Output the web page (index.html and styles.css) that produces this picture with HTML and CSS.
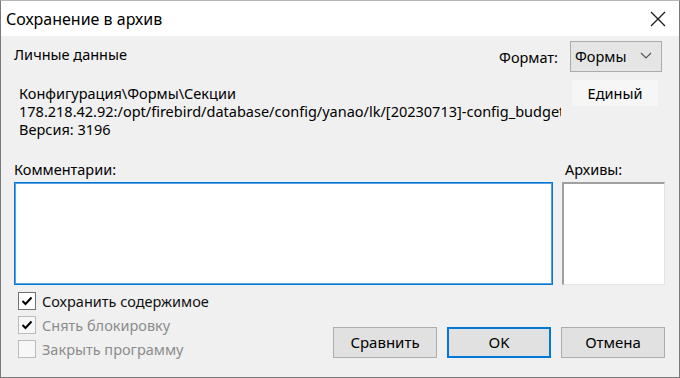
FILE: index.html
```html
<!DOCTYPE html>
<html lang="ru">
<head>
	<meta charset="UTF-8">
	<title>Сохранение в архив</title>
	<link rel="stylesheet" href="styles.css">
</head>
<body>
	<div class="dialog">
		<div class="titlebar">
			<span class="title">Сохранение в архив</span>
			<span class="close">
				<svg width="16" height="16" viewBox="0 0 16 16"><path d="M1 1L15 15M15 1L1 15" stroke="#1a1a1a" stroke-width="1.3" fill="none"/></svg>
			</span>
		</div>
		<div class="content">
			<div class="row-head">
				<div class="caption">Личные данные</div>
				<div class="format">
					<span>Формат:</span>
					<div class="select">
						<span>Формы</span>
						<svg width="12" height="8" viewBox="0 0 12 8"><path d="M1 1L6 6L11 1" stroke="#555" stroke-width="1.2" fill="none"/></svg>
					</div>
				</div>
			</div>
			<div class="row-info">
				<div class="info">
					<p>Конфигурация\Формы\Секции</p>
					<p>178.218.42.92:/opt/firebird/database/config/yanao/lk/[20230713]-config_budget.fdb</p>
					<p>Версия: 3196</p>
				</div>
				<div class="flat-btn">Единый</div>
			</div>
			<div class="fields">
				<div class="label">Комментарии:</div>
				<div class="label">Архивы:</div>
				<div class="memo"></div>
				<div class="listbox"></div>
			</div>
			<div class="row-bottom">
				<div class="checks">
					<label class="check"><span class="box on">
						<svg width="12" height="10" viewBox="0 0 12 10"><path d="M1.5 5L4.5 8L10.5 1.5" stroke="#000" stroke-width="2" fill="none"/></svg>
					</span>Сохранить содержимое</label>
					<label class="check disabled"><span class="box on">
						<svg width="12" height="10" viewBox="0 0 12 10"><path d="M1.5 5L4.5 8L10.5 1.5" stroke="#000" stroke-width="2" fill="none"/></svg>
					</span>Снять блокировку</label>
					<label class="check disabled"><span class="box"></span>Закрыть программу</label>
				</div>
				<div class="buttons">
					<div class="btn">Сравнить</div>
					<div class="btn default">OK</div>
					<div class="btn">Отмена</div>
				</div>
			</div>
		</div>
	</div>
</body>
</html>
```

FILE: styles.css
```css
*{margin:0; padding:0; box-sizing:border-box;}
body{
	width:680px;
	height:378px;
	font-family:"Noto Sans","Open Sans","DejaVu Sans",sans-serif;
	font-size:14.5px;
	color:#000;
	background:#f0f0f0;
}
.dialog{
	width:680px;
	height:378px;
	border:1px solid #7a7a7a;
	border-top-color:#b5b5b5;
	background:#f0f0f0;
	display:flex;
	flex-direction:column;
}
.titlebar{
	height:35px;
	background:#fff;
	display:flex;
	align-items:center;
	justify-content:space-between;
	padding:0 13px 0 5px;
}
.title{
	font-size:16px;
}
.close{
	display:flex;
	padding-top:1px;
}
.content{
	flex:1;
	display:flex;
	flex-direction:column;
	padding:4px 14px 0 13px;
}
.row-head{
	display:flex;
	justify-content:space-between;
	height:32px;
}
.caption{
	padding-top:4px;
}
.format{
	display:flex;
	align-items:center;
	gap:12px;
	margin-right:3px;
}
.format > span{
	padding-top:2px;
}
.select{
	width:92px;
	height:31px;
	background:#e5e5e5;
	border:1px solid #acacac;
	display:flex;
	align-items:center;
	justify-content:space-between;
	padding:0 9px 0 4px;
}
.row-info{
	display:flex;
	justify-content:space-between;
	margin-top:8px;
	height:79px;
}
.info{
	width:547px;
	overflow:hidden;
	white-space:nowrap;
	padding:4px 0 0 5px;
	line-height:18px;
}
.flat-btn{
	width:86px;
	height:26px;
	background:#f6f6f6;
	text-align:center;
	line-height:26px;
	margin-right:7px;
}
.fields{
	display:grid;
	grid-template-columns:539px 103px;
	column-gap:9px;
	grid-template-rows:23px 103px;
}
.label + .label{
	padding-left:3px;
}
.memo{
	background:#fff;
	border:1px solid #0078d7;
	box-shadow:inset 0 0 0 1px #5aa0e0;
}
.listbox{
	background:#fff;
	border:1px solid #e3e3e3;
	border-top:2px solid #a0a0a0;
	border-left:2px solid #a0a0a0;
}
.row-bottom{
	flex:1;
	display:flex;
	justify-content:space-between;
	padding-top:7px;
}
.checks{
	display:flex;
	flex-direction:column;
	gap:6px;
	padding-left:4px;
}
.check{
	display:flex;
	align-items:center;
	gap:6px;
	height:18px;
	font-size:14.5px;
	color:#111;
}
.check.disabled{
	color:#8c8c8c;
}
.box{
	width:18px;
	height:18px;
	border:1px solid #707070;
	background:#fff;
	display:flex;
	align-items:center;
	justify-content:center;
}
.disabled .box{
	border-color:#bcbcbc;
	background:#f7f7f7;
}
.buttons{
	display:flex;
	gap:10px;
	align-self:flex-end;
	margin-bottom:19px;
}
.btn{
	width:104px;
	height:31px;
	background:#e1e1e1;
	border:1px solid #adadad;
	text-align:center;
	line-height:29px;
	font-size:15px;
}
.btn.default{
	border:2px solid #0078d7;
	line-height:27px;
}
```
